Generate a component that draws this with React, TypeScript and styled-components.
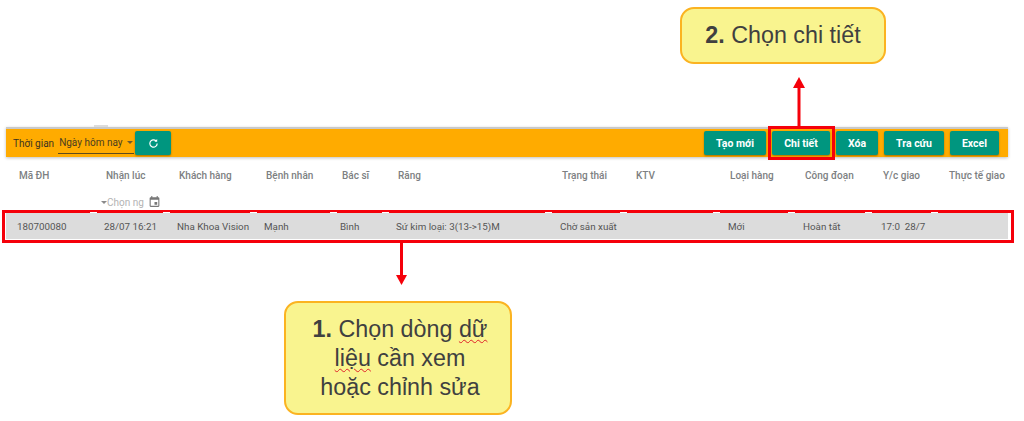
import React from 'react'
import styled, { createGlobalStyle } from 'styled-components'

const GlobalStyle = createGlobalStyle`
  html, body {
    margin: 0;
    padding: 0;
    background: #fff;
    font-family: Roboto, "Liberation Sans", sans-serif;
  }
`

const Page = styled.div`
  position: relative;
  width: 1024px;
  height: 421px;
  overflow: hidden;
  padding: 127px 16px 0 6px;
  box-sizing: border-box;
`

const Toolbar = styled.div`
  position: relative;
  display: flex;
  align-items: center;
  height: 28px;
  border-top: 2px solid #c9c9c9;
  background: #ffab00;
  padding: 0 9px 0 7px;
  box-shadow: 0 1px 3px rgba(0, 0, 0, 0.25);
`

const TabStub = styled.div`
  position: absolute;
  left: 88px;
  top: -4px;
  width: 14px;
  height: 2px;
  background: #dcdcdc;
`

const TimeLabel = styled.span`
  font-size: 10px;
  color: #3b3320;
  margin-right: 4px;
`

const TimeSelect = styled.div`
  display: flex;
  align-items: center;
  justify-content: space-between;
  width: 76px;
  height: 22px;
  box-sizing: border-box;
  border-bottom: 1px solid #5c4a1c;
  padding-left: 1px;
  font-size: 10px;
  color: #4a3d20;
  &::after {
    content: '';
    border: 3px solid transparent;
    border-top: 3px solid #6b5a2c;
    border-bottom: 0;
    margin-right: 1px;
  }
`

const Button = styled.button<{ $w: number }>`
  width: ${p => p.$w}px;
  height: 24px;
  border: 0;
  border-radius: 2px;
  background: #00967f;
  color: #fff;
  font-family: Roboto, sans-serif;
  font-size: 10.5px;
  font-weight: 700;
  padding: 0;
  display: flex;
  align-items: center;
  justify-content: center;
  box-shadow: 0 1px 2px rgba(0, 0, 0, 0.35);
`

const Refresh = styled(Button)`
  margin-left: 1px;
`

const Actions = styled.div`
  margin-left: auto;
  display: flex;
  gap: 6px;
`

const Columns = styled.div`
  display: grid;
  grid-template-columns: 87px 73px 87px 76px 56px 164px 74px 94px 75px 78px 66px 59px;
`

const HeadRow = styled(Columns)`
  padding: 12px 0 0 13px;
  height: 21px;
  box-sizing: content-box;
  font-size: 10px;
  font-weight: 500;
  color: #7d7f82;
  line-height: 13px;
`

const FilterRow = styled.div`
  display: flex;
  align-items: center;
  height: 14px;
  margin: 5px 0 0 95px;
  font-size: 10px;
  color: #b3b3b3;
  &::before {
    content: '';
    border: 3px solid transparent;
    border-top: 3px solid #8a8a8a;
    border-bottom: 0;
  }
`

const CalendarIcon = styled.svg`
  width: 13px;
  height: 14px;
  margin-left: 4px;
`

const DataRow = styled(Columns)`
  margin-top: 4px;
  height: 26px;
  align-items: center;
  padding-left: 11px;
  background: #dcdcdc;
  font-size: 9.8px;
  color: #555;
  span {
    white-space: pre;
  }
`

const Highlight = styled.div<{ $x: number; $y: number; $w: number; $h: number }>`
  position: absolute;
  left: ${p => p.$x}px;
  top: ${p => p.$y}px;
  width: ${p => p.$w}px;
  height: ${p => p.$h}px;
  box-sizing: border-box;
  border: 3px solid #f5000a;
`

const Notch = styled.i<{ $x: number; $w: number }>`
  position: absolute;
  left: ${p => p.$x}px;
  top: -1.5px;
  width: ${p => p.$w}px;
  height: 1.5px;
  background: #fff;
`

const Callout = styled.div<{ $x: number; $y: number; $w: number; $h: number }>`
  position: absolute;
  left: ${p => p.$x}px;
  top: ${p => p.$y}px;
  width: ${p => p.$w}px;
  height: ${p => p.$h}px;
  box-sizing: border-box;
  display: flex;
  align-items: center;
  justify-content: center;
  text-align: center;
  background: #f9f48f;
  border: 2px solid #fbb321;
  border-radius: 14px;
  font-family: "Liberation Sans", Arial, sans-serif;
  font-size: 23.3px;
  line-height: 29px;
  color: #404040;
`

const WideText = styled.span`
  margin-left: 4px;
`

const Spell = styled.span`
  text-decoration: underline wavy #e0202a 1px;
  text-underline-offset: 2px;
`

const Arrow = styled.svg<{ $x: number; $y: number }>`
  position: absolute;
  left: ${p => p.$x}px;
  top: ${p => p.$y}px;
`

const headers = ['Mã ĐH', 'Nhận lúc', 'Khách hàng', 'Bệnh nhân', 'Bác sĩ', 'Răng', 'Trạng thái', 'KTV', 'Loại hàng', 'Công đoạn', 'Y/c giao', 'Thực tế giao']
const cells = ['180700080', '28/07 16:21', 'Nha Khoa Vision', 'Mạnh', 'Bình', 'Sứ kim loại: 3(13->15)M', 'Chờ sản xuất', '', 'Mới', 'Hoàn tất', '17:0  28/7', '']
const actions = [
  { label: 'Tạo mới', w: 62 },
  { label: 'Chi tiết', w: 58 },
  { label: 'Xóa', w: 42 },
  { label: 'Tra cứu', w: 60 },
  { label: 'Excel', w: 49 },
]
// column separators of the table that show through the red frame
const notches = [85, 158, 245, 325, 377, 540, 615, 708, 783, 860, 926]

export default function App() {
  return (
    <Page>
      <GlobalStyle />
      <Toolbar>
        <TabStub />
        <TimeLabel>Thời gian</TimeLabel>
        <TimeSelect>Ngày hôm nay</TimeSelect>
        <Refresh $w={36} aria-label="refresh">
          <svg width="11" height="11" viewBox="0 0 24 24" fill="none" stroke="#fff" strokeWidth="2.6">
            <path d="M20 12a8 8 0 1 1-2.6-5.9" />
            <path d="M20 2v6h-6" fill="#fff" stroke="none" />
          </svg>
        </Refresh>
        <Actions>
          {actions.map(a => <Button key={a.label} $w={a.w}>{a.label}</Button>)}
        </Actions>
      </Toolbar>
      <HeadRow>
        {headers.map(h => <span key={h}>{h}</span>)}
      </HeadRow>
      <FilterRow>
        Chọn ng
        <CalendarIcon viewBox="0 0 24 24" fill="#777">
          <path d="M19 3h-1V1h-2v2H8V1H6v2H5a2 2 0 0 0-2 2v14a2 2 0 0 0 2 2h14a2 2 0 0 0 2-2V5a2 2 0 0 0-2-2zm0 16H5V8h14v11zm-7-7h5v5h-5z" />
        </CalendarIcon>
      </FilterRow>
      <DataRow>
        {cells.map((c, i) => <span key={i}>{c}</span>)}
      </DataRow>

      <Highlight $x={2} $y={210} $w={1012} $h={33}>
        {notches.map(x => <Notch key={x} $x={x} $w={7} />)}
      </Highlight>
      <Highlight $x={768} $y={126} $w={67} $h={34} />

      <Arrow $x={793} $y={77} width="12" height="50" viewBox="0 0 12 50">
        <path d="M6 50V10" stroke="#f5000a" strokeWidth="3" />
        <path d="M6 0l6 11H0z" fill="#f5000a" />
      </Arrow>
      <Arrow $x={396} $y={243} width="12" height="42" viewBox="0 0 12 42">
        <path d="M5.5 0v33" stroke="#f5000a" strokeWidth="3" />
        <path d="M5.5 42L0 32h11z" fill="#f5000a" />
      </Arrow>

      <Callout $x={680} $y={7} $w={206} $h={57}>
        <span><b>2.</b> Chọn chi tiết</span>
      </Callout>
      <Callout $x={284} $y={301} $w={228} $h={114}>
        <WideText>
          <b>1.</b> Chọn dòng <Spell>dữ</Spell><br />
          <Spell>liệu</Spell> cần xem<br />
          hoặc chỉnh sửa
        </WideText>
      </Callout>
    </Page>
  )
}
